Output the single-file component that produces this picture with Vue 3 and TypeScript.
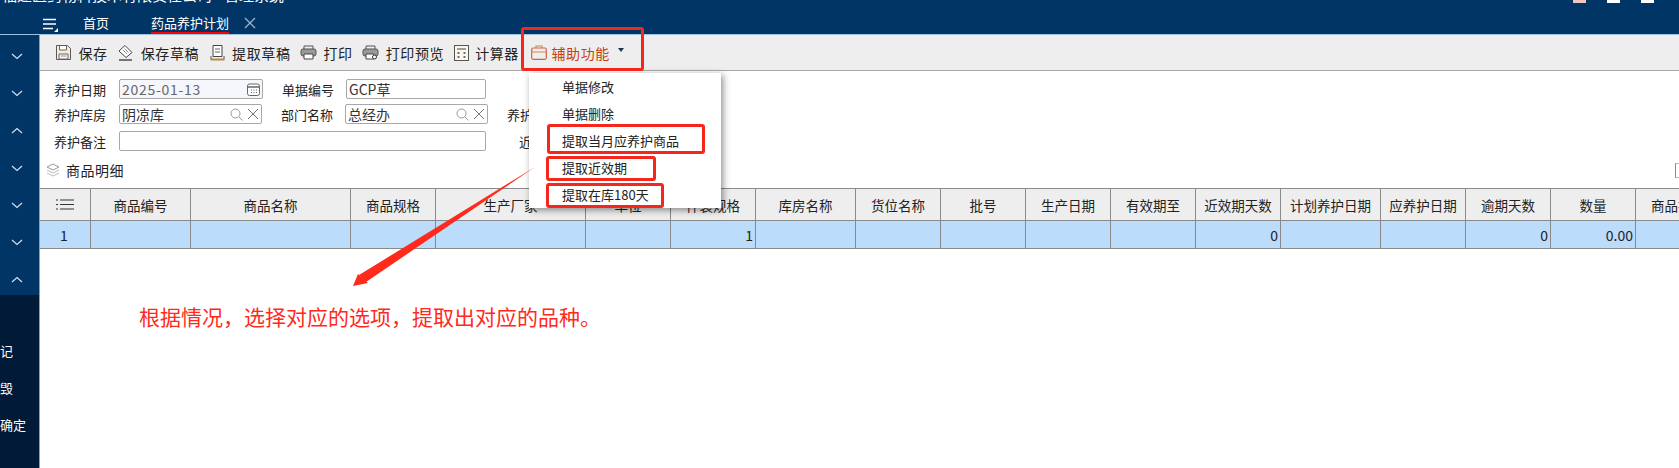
<script setup lang="ts">
interface Col { title: string; width: number; value?: string }

const columns: Col[] = [
  { title: '', width: 51, value: '1' },
  { title: '商品编号', width: 100 },
  { title: '商品名称', width: 160 },
  { title: '商品规格', width: 85 },
  { title: '生产厂家', width: 150 },
  { title: '单位', width: 85 },
  { title: '件装规格', width: 85, value: '1' },
  { title: '库房名称', width: 100 },
  { title: '货位名称', width: 85 },
  { title: '批号', width: 85 },
  { title: '生产日期', width: 85 },
  { title: '有效期至', width: 85 },
  { title: '近效期天数', width: 85, value: '0' },
  { title: '计划养护日期', width: 100 },
  { title: '应养护日期', width: 85 },
  { title: '逾期天数', width: 85, value: '0' },
  { title: '数量', width: 85, value: '0.00' },
  { title: '商品批号', width: 85 },
]
const menu = ['单据修改', '单据删除', '提取当月应养护商品', '提取近效期', '提取在库180天']
const navTop = [0, 1, 2, 3, 4, 5, 6]
const navUp = [false, false, true, false, false, false, true]
</script>

<template>
  <div class="page">
    <header class="topbar">
      <div class="title">福建医药物料技术有限责任公司 - 管理系统</div>
      <div class="tabs">
        <svg class="menu-ic" width="15" height="14" viewBox="0 0 15 14">
          <path d="M0 1.500h13M0 6h13M0 10.500h10" stroke="#fff" stroke-width="1.400" fill="none" />
          <path d="M15 10v4h-4z" fill="#fff" />
        </svg>
        <span class="tab home">首页</span>
        <span class="tab active">药品养护计划</span>
        <svg class="tab-x" width="12" height="12" viewBox="0 0 12 12">
          <path d="M1 1l10 10M11 1L1 11" stroke="#9fb2c8" stroke-width="1.300" />
        </svg>
      </div>
      <div class="top-icons">
        <i class="ti pink"></i><i class="ti white"></i><i class="ti white"></i><i class="ti cyan"></i>
      </div>
    </header>

    <div class="body">
      <aside class="side">
        <div class="side-nav">
          <div v-for="n in navTop" :key="n" class="side-row">
            <svg width="12" height="7" viewBox="0 0 12 7" :class="{ up: navUp[n] }">
              <path d="M1 1l5 4.500L11 1" stroke="#cfe0f0" stroke-width="1.200" fill="none" />
            </svg>
          </div>
        </div>
        <div class="side-low">
          <div class="side-txt">记</div>
          <div class="side-txt">毁</div>
          <div class="side-txt">确定</div>
        </div>
      </aside>

      <main class="main">
        <div class="toolbar">
          <span class="tool">
            <svg width="17" height="17" viewBox="0 0 17 17"><path d="M1.500 1.500h11l3 3v11h-14z" fill="#f6ecd9" stroke="#5a5a5a" /><path d="M4.500 2v4h7V2M4 10h9v5H4z" fill="#fff" stroke="#666" /><path d="M5.500 12h6" stroke="#888" /></svg>保存
          </span>
          <span class="tool">
            <svg width="17" height="17" viewBox="0 0 17 17"><path d="M2 7l6-5.500 7 7-6 5z" fill="#fff" stroke="#444" /><path d="M6 6l4 4M7.500 4.500l4 4" stroke="#888" /><path d="M2 16h13" stroke="#333" stroke-width="1.300" /></svg>保存草稿
          </span>
          <span class="tool">
            <svg width="17" height="17" viewBox="0 0 17 17"><path d="M4 1.500h9v11H4z" fill="#fff" stroke="#444" /><path d="M6 5h5M6 8h5" stroke="#666" /><path d="M1.500 15.500h14" stroke="#b9894f" stroke-width="2" /><path d="M2 12v3M15 12v3" stroke="#555" /></svg>提取草稿
          </span>
          <span class="tool">
            <svg width="17" height="17" viewBox="0 0 17 17"><path d="M4 5V2h9v3" fill="#eee" stroke="#555" /><rect x="1" y="5" width="15" height="7" rx="2" fill="#999" stroke="#555" /><path d="M4 10h9v5H4z" fill="#fff" stroke="#444" /></svg>打印
          </span>
          <span class="tool">
            <svg width="17" height="17" viewBox="0 0 17 17"><path d="M4 5V2h9v3" fill="#eee" stroke="#555" /><rect x="1" y="5" width="15" height="7" rx="2" fill="#999" stroke="#555" /><path d="M4 10h8v5H4z" fill="#fff" stroke="#444" /><circle cx="12.500" cy="13" r="2" fill="#fff" stroke="#333" /></svg>打印预览
          </span>
          <span class="tool">
            <svg width="15" height="16" viewBox="0 0 15 16"><rect x=".5" y=".5" width="14" height="15" fill="#fbf6ec" stroke="#555" /><path d="M3 4h9" stroke="#777" stroke-width="1.400" /><path d="M3.500 8h2M9.500 8h2M3.500 12h2M9.500 12h2" stroke="#444" stroke-width="1.600" /></svg>计算器
          </span>
          <span class="tool aux">
            <svg width="16" height="15" viewBox="0 0 16 15"><rect x=".7" y="3" width="14.600" height="11.300" rx="1.500" fill="none" stroke="#d0604a" stroke-width="1.200" /><path d="M1 7h14M5 3V1h6v2" fill="none" stroke="#c88a50" stroke-width="1.100" /></svg>辅助功能
            <i class="caret"></i>
          </span>
        </div>

        <section class="form">
          <div class="form-row r1">
            <label>养护日期</label>
            <div class="field date w144">
              <span>2025-01-13</span>
              <svg width="13" height="13" viewBox="0 0 13 13"><rect x=".5" y="1" width="12" height="11.500" rx="2" fill="#fff" stroke="#666" /><path d="M1 4h11" stroke="#666" stroke-width="1.500" /><path d="M4 7h1M6.500 7h1M9 7h1M4 9.500h1M6.500 9.500h1M9 9.500h1" stroke="#666" /></svg>
            </div>
            <label class="l2">单据编号</label>
            <div class="field w140"><span>GCP草</span></div>
          </div>
          <div class="form-row r2">
            <label>养护库房</label>
            <div class="field w143">
              <span>阴凉库</span>
              <span class="tail">
                <svg width="13" height="13" viewBox="0 0 13 13"><circle cx="5.500" cy="5.500" r="4.500" fill="none" stroke="#999" /><path d="M9 9l3.500 3.500" stroke="#999" /></svg>
                <svg width="12" height="12" viewBox="0 0 12 12"><path d="M1 1l10 10M11 1L1 11" stroke="#777" /></svg>
              </span>
            </div>
            <label class="l2">部门名称</label>
            <div class="field w143">
              <span>总经办</span>
              <span class="tail">
                <svg width="13" height="13" viewBox="0 0 13 13"><circle cx="5.500" cy="5.500" r="4.500" fill="none" stroke="#999" /><path d="M9 9l3.500 3.500" stroke="#999" /></svg>
                <svg width="12" height="12" viewBox="0 0 12 12"><path d="M1 1l10 10M11 1L1 11" stroke="#777" /></svg>
              </span>
            </div>
            <label class="l3">养护</label>
          </div>
          <div class="form-row r3">
            <label>养护备注</label>
            <div class="field w367"></div>
            <label class="l4">近</label>
          </div>
        </section>

        <div class="detail">
          <svg width="14" height="14" viewBox="0 0 14 14"><path d="M7 1l6 3-6 3-6-3z" fill="none" stroke="#9a9a9a" /><path d="M1 7l6 3 6-3M1 10l6 3 6-3" fill="none" stroke="#b9b9b9" /></svg>
          <span class="detail-txt">商品明细</span>
          <i class="check"></i>
        </div>

        <div class="table">
          <div class="thead">
            <div v-for="(c, i) in columns" :key="i" class="cell" :style="{ width: c.width + 'px' }">
              <svg v-if="i === 0" width="18" height="11" viewBox="0 0 18 11"><path d="M0 1h2M0 5.500h2M0 10h2M4 1h14M4 5.500h14M4 10h14" stroke="#333" stroke-width="1.100" /></svg>
              <template v-else>{{ c.title }}</template>
            </div>
          </div>
          <div class="tbody">
            <div v-for="(c, i) in columns" :key="i" class="cell" :class="{ num: i > 0 }" :style="{ width: c.width + 'px' }">{{ c.value }}</div>
          </div>
        </div>
      </main>
    </div>

    <div class="dropdown">
      <div v-for="m in menu" :key="m" class="dd-item">{{ m }}</div>
    </div>

    <i class="mark m1"></i><i class="mark m2"></i><i class="mark m3"></i><i class="mark m4"></i>

    <svg class="arrow" width="200" height="135" viewBox="0 0 200 135">
      <path d="M190 1 L14 109 L21 116 Z" fill="#ff2a1c" />
      <path d="M8 120 L13 108 L23 117 Z" fill="#ff2a1c" />
    </svg>

    <div class="note">根据情况，选择对应的选项，提取出对应的品种。</div>
  </div>
</template>

<style>
html, body { margin: 0; background: #fff; overflow: hidden; }
</style>

<style scoped>
.page {
  position: relative;
  width: 1679px;
  height: 468px;
  overflow: hidden;
  display: flex;
  flex-direction: column;
  font-family: "Noto Sans CJK SC", "Noto Sans", sans-serif;
  font-size: 13px;
  color: #222;
}
.topbar {
  position: relative;
  height: 35px;
  flex: none;
  background: #003566;
  border-bottom: 1px solid #9cc3e2;
  box-sizing: border-box;
  overflow: hidden;
}
.title {
  height: 3px;
  line-height: 0;
  margin-top: -5px;
  padding-top: 5px;
  padding-left: 2px;
  color: #fff;
  font-size: 15px;
  white-space: nowrap;
  overflow: visible;
  box-sizing: content-box;
  transform: translateY(-5px);
}
.tabs {
  display: flex;
  align-items: flex-end;
  height: 31px;
  padding-left: 43px;
  color: #fff;
}
.menu-ic { margin-bottom: 2px; }
.tab { line-height: 18px; }
.home { margin-left: 25px; margin-bottom: 2px; }
.active { margin-left: 42px; border-bottom: 2px solid #f00; }
.tab-x { margin-left: 15px; margin-bottom: 5px; }
.top-icons {
  position: absolute;
  top: 0;
  left: 1573px;
  display: flex;
  gap: 21px;
}
.ti { width: 13px; height: 3px; background: #fff; }
.ti.pink { background: #f4c6c0; }
.ti.cyan { width: 8px; margin-left: 8px; background: #7fd6ee; }
.body { flex: 1; display: flex; min-height: 0; }
.side {
  width: 40px;
  flex: none;
  display: flex;
  flex-direction: column;
  background: #001a38;
  border-right: 1px solid #7d9fd8;
  box-sizing: border-box;
  overflow: hidden;
}
.side-nav { height: 260px; box-sizing: border-box; background: #003566; padding-top: 3px; }
.side-row {
  height: 37.200px;
  display: flex;
  align-items: center;
  justify-content: center;
  padding-right: 5px;
}
.side-row .up { transform: rotate(180deg); }
.side-low { padding-top: 37px; color: #fff; }
.side-txt {
  height: 37px;
  line-height: 37px;
  font-size: 13px;
  white-space: nowrap;
}
.main { flex: 1; min-width: 0; display: flex; flex-direction: column; overflow: hidden; }
.toolbar {
  height: 36px;
  flex: none;
  box-sizing: border-box;
  display: flex;
  align-items: center;
  padding: 0 0 0 15px;
  background: #eee;
  border-bottom: 1px solid #a8a8a8;
  font-size: 14px;
  letter-spacing: .6px;
  white-space: nowrap;
}
.tool { display: inline-flex; align-items: center; gap: 6.500px; margin-right: 9.500px; }
.aux { color: #cc3d10; gap: 4px; margin-left: 3px; }
.caret {
  width: 0;
  height: 0;
  margin: -6px 0 0 4px;
  border: 3.500px solid transparent;
  border-top: 4px solid #1f3550;
  border-bottom: 0;
}
.form { padding-top: 8px; height: 82px; box-sizing: border-box; flex: none; }
.form-row { display: flex; align-items: center; padding-left: 14px; white-space: nowrap; }
.r1 { height: 20px; margin-bottom: 5px; }
.r2 { height: 20px; margin-bottom: 7px; }
.r3 { height: 20px; }
label { width: 65px; flex: none; }
label.l2 { width: 64px; margin-left: 19px; }
label.l3 { margin-left: 19px; }
label.l4 { margin-left: 33px; }
.field {
  height: 20px;
  box-sizing: border-box;
  border: 1px solid #a8a8a8;
  border-radius: 2px;
  display: flex;
  align-items: center;
  justify-content: space-between;
  padding: 0 2px;
  background: #fff;
  flex: none;
  font-size: 14px;
  color: #333;
}
.date { background: #f5f7fd; color: #666; letter-spacing: .7px; }
.w144 { width: 144px; }
.w140 { width: 140px; }
.w143 { width: 143px; }
.w367 { width: 367px; }
.tail { display: inline-flex; align-items: center; gap: 4px; }
.detail {
  height: 36px;
  flex: none;
  display: flex;
  align-items: center;
  padding-left: 6px;
  gap: 6px;
  position: relative;
  margin-top: -1px;
}
.detail-txt { font-size: 14px; letter-spacing: .5px; }
.check {
  position: absolute;
  right: -8px;
  top: 11px;
  width: 10px;
  height: 13px;
  border: 1px solid #c8b68a;
  border-left-color: #7d8e9c;
}
.table { width: 1700px; border-top: 1px solid #8a8a8a; font-size: 14px; }
.thead, .tbody { display: flex; border-bottom: 1px solid #8a8a8a; box-sizing: border-box; }
.thead { height: 32px; background: #eee; font-size: 13.500px; }
.tbody { height: 28px; background: #bbdcfb; }
.cell {
  flex: none;
  box-sizing: border-box;
  border-right: 1px solid #8a8a8a;
  display: flex;
  align-items: center;
  justify-content: center;
  white-space: nowrap;
  overflow: hidden;
}
.tbody .cell { padding-right: 2px; }
.num { justify-content: flex-end; }
.dropdown {
  position: absolute;
  left: 529px;
  top: 73px;
  width: 192px;
  height: 135px;
  background: #fff;
  box-shadow: 2px 2px 7px rgba(0, 0, 0, .45);
}
.dd-item {
  height: 27px;
  line-height: 27px;
  padding-left: 33px;
  white-space: nowrap;
}
.mark {
  position: absolute;
  box-sizing: border-box;
  border: 3px solid #f5261b;
  border-radius: 3px;
}
.m1 { left: 521px; top: 27px; width: 123px; height: 44px; }
.m2 { left: 547px; top: 124px; width: 158px; height: 30px; }
.m3 { left: 546px; top: 156px; width: 110px; height: 25px; }
.m4 { left: 546px; top: 183px; width: 118px; height: 25px; }
.arrow { position: absolute; left: 345px; top: 166px; }
.note {
  position: absolute;
  left: 139px;
  top: 301px;
  font-size: 21px;
  line-height: 30px;
  color: #ff2a1c;
  white-space: nowrap;
}
</style>
